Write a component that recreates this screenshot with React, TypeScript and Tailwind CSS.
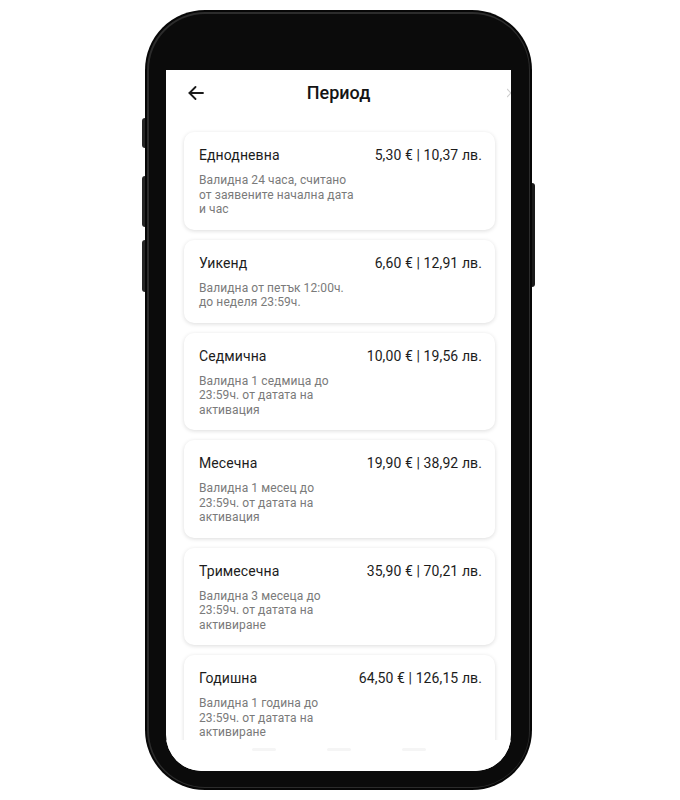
import { Fragment } from 'react';

type Plan = {
  id: string;
  name: string;
  price: string;
  lines: string[];
};

const plans: Plan[] = [
  {
    id: 'day',
    name: 'Еднодневна',
    price: '5,30 € | 10,37 лв.',
    lines: ['Валидна 24 часа, считано', 'от заявените начална дата', 'и час'],
  },
  {
    id: 'weekend',
    name: 'Уикенд',
    price: '6,60 € | 12,91 лв.',
    lines: ['Валидна от петък 12:00ч.', 'до неделя 23:59ч.'],
  },
  {
    id: 'week',
    name: 'Седмична',
    price: '10,00 € | 19,56 лв.',
    lines: ['Валидна 1 седмица до', '23:59ч. от датата на', 'активация'],
  },
  {
    id: 'month',
    name: 'Месечна',
    price: '19,90 € | 38,92 лв.',
    lines: ['Валидна 1 месец до', '23:59ч. от датата на', 'активация'],
  },
  {
    id: 'quarter',
    name: 'Тримесечна',
    price: '35,90 € | 70,21 лв.',
    lines: ['Валидна 3 месеца до', '23:59ч. от датата на', 'активиране'],
  },
  {
    id: 'year',
    name: 'Годишна',
    price: '64,50 € | 126,15 лв.',
    lines: ['Валидна 1 година до', '23:59ч. от датата на', 'активиране'],
  },
];

function BackArrow() {
  return (
    <svg width="16" height="14" viewBox="0 0 16 14" fill="none" stroke="#1a1a1a" strokeWidth="1.8" strokeLinecap="round" strokeLinejoin="round">
      <path d="M15 7H1.5" />
      <path d="M7.5 1L1.5 7l6 6" />
    </svg>
  );
}

function PlanCard({ plan }: { plan: Plan }) {
  return (
    <article className="shrink-0 rounded-[10px] bg-white pl-[15px] pr-[13px] pt-[14px] pb-[13px] shadow-[0_1px_4px_rgba(0,0,0,0.14)]">
      <div className="flex items-start justify-between gap-3 text-[14px] leading-[18px] tracking-[0.1px] text-[#1c1c1c]">
        <p>{plan.name}</p>
        <p className="whitespace-nowrap">{plan.price}</p>
      </div>
      <p className="mt-[9px] text-[12px] leading-[14.5px] tracking-[0.1px] text-[#7a7a7a]">
        {plan.lines.map((line, i) => (
          <Fragment key={i}>
            {i > 0 && <br />}
            {line}
          </Fragment>
        ))}
      </p>
    </article>
  );
}

export default function App() {
  return (
    <div
      className="h-[800px] w-[680px] overflow-hidden bg-white pt-[10px]"
      style={{ fontFamily: 'Roboto, "Noto Sans", "Liberation Sans", sans-serif' }}
    >
      <div className="relative ml-[145px] h-[780px] w-[387px]">
        {/* side buttons */}
        <span className="absolute left-[-3px] top-[108px] h-[30px] w-[3px] rounded-l-sm bg-[#262626]" />
        <span className="absolute left-[-3px] top-[166px] h-[51px] w-[3px] rounded-l-sm bg-[#262626]" />
        <span className="absolute left-[-3px] top-[230px] h-[52px] w-[3px] rounded-l-sm bg-[#262626]" />
        <span className="absolute right-[-3px] top-[173px] h-[104px] w-[3px] rounded-r-sm bg-[#1a1a1a]" />

        <div className="h-full w-full rounded-[60px] bg-[#070707] p-[2px]">
          <div className="h-full w-full rounded-[58px] bg-[#2c2c2c] p-[1.5px]">
            <div className="flex h-full w-full flex-col rounded-[56px] bg-[#0b0b0b] px-[17.5px] pt-[56.5px] pb-[15.5px]">
              <div className="relative flex flex-1 flex-col overflow-hidden rounded-b-[36px] bg-white">
                <header className="relative flex h-[46px] shrink-0 items-center justify-center">
                  <button type="button" className="absolute left-[22px] top-[16px] flex items-center">
                    <BackArrow />
                  </button>
                  <h1 className="text-[18px] font-medium leading-[22px] text-[#141414]">Период</h1>
                  <svg className="absolute right-0 top-[18px]" width="4" height="10" viewBox="0 0 4 10" fill="none" stroke="#cfcfcf" strokeWidth="1.2">
                    <path d="M0 1l4 4M0 9l4-4" />
                  </svg>
                </header>
                <div className="flex flex-1 flex-col gap-[10px] overflow-hidden pl-[18px] pr-[16px] pt-[16px] pb-[4px]">
                  {plans.map((plan) => (
                    <PlanCard key={plan.id} plan={plan} />
                  ))}
                </div>
                <div className="flex h-[31px] shrink-0 items-start justify-around bg-white px-[60px] pt-[8px]">
                  <span className="h-[3px] w-[24px] rounded-full bg-[#f5f5f5]" />
                  <span className="h-[3px] w-[24px] rounded-full bg-[#f5f5f5]" />
                  <span className="h-[3px] w-[24px] rounded-full bg-[#f5f5f5]" />
                </div>
              </div>
            </div>
          </div>
        </div>
      </div>
    </div>
  );
}
